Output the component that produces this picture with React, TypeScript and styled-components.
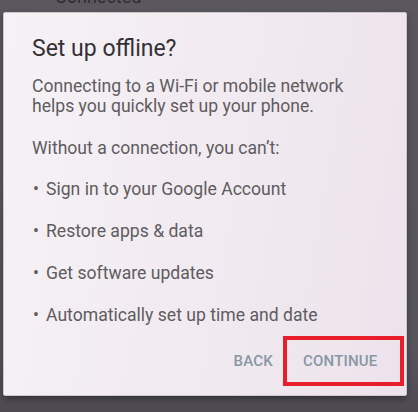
import React from "react";
import styled, { createGlobalStyle } from "styled-components";

const GlobalStyle = createGlobalStyle`
  html, body {
    margin: 0;
    padding: 0;
    background: #58565c;
  }
  body {
    font-family: Roboto, "Noto Sans", "Liberation Sans", sans-serif;
  }
`;

const items = [
  "Sign in to your Google Account",
  "Restore apps & data",
  "Get software updates",
  "Automatically set up time and date",
];

const App = () => (
  <Screen>
    <GlobalStyle />
    <StatusStrip>
      <StatusText>Connected</StatusText>
    </StatusStrip>
    <Dialog>
      <Title>Set up offline?</Title>
      <Paragraph>
        Connecting to a Wi-Fi or mobile network
        <br />
        helps you quickly set up your phone.
      </Paragraph>
      <Lead>Without a connection, you can’t:</Lead>
      <List>
        {items.map((item) => (
          <ListItem key={item}>
            <Bullet>•</Bullet>
            <span>{item}</span>
          </ListItem>
        ))}
      </List>
      <Footer>
        <TextButton>BACK</TextButton>
        <Highlight>
          <TextButton>CONTINUE</TextButton>
        </Highlight>
      </Footer>
    </Dialog>
  </Screen>
);

const Screen = styled.div`
  width: 418px;
  height: 412px;
  overflow: hidden;
  background: linear-gradient(180deg, #5a585e 0%, #57555b 85%, #4d4b51 100%);
`;

const StatusStrip = styled.div`
  height: 12px;
  overflow: hidden;
  display: flex;
  align-items: flex-end;
  padding-left: 55px;
`;

const StatusText = styled.span`
  font-size: 18px;
  line-height: 18px;
  margin-bottom: 6px;
  color: #2e2c32;
`;

const Dialog = styled.div`
  width: 404px;
  height: 384px;
  margin-left: 3px;
  box-sizing: border-box;
  padding: 22px 0 9px 28px;
  display: flex;
  flex-direction: column;
  background: linear-gradient(100deg, #f5f2f5 0%, #f1eaf0 55%, #ece2eb 100%);
  border: 1px solid #cfc7ce;
  border-radius: 2px;
  box-shadow: 0 3px 6px rgba(0, 0, 0, 0.35);
`;

const Title = styled.div`
  font-size: 23px;
  line-height: 28px;
  color: #333135;
`;

const Paragraph = styled.div`
  margin-top: 13px;
  font-size: 17.6px;
  line-height: 20px;
  color: #5e5c60;
`;

const Lead = styled(Paragraph)`
  margin-top: 22px;
`;

const List = styled.div`
  margin-top: 21px;
  display: flex;
  flex-direction: column;
  gap: 22px;
`;

const ListItem = styled.div`
  display: flex;
  font-size: 17.6px;
  line-height: 20px;
  color: #5e5c60;
`;

const Bullet = styled.span`
  width: 14px;
  padding-left: 1px;
  box-sizing: border-box;
`;

const Footer = styled.div`
  margin-top: auto;
  display: flex;
  justify-content: flex-end;
  align-items: center;
  gap: 10px;
  padding-right: 2px;
`;

const TextButton = styled.span`
  font-size: 15px;
  font-weight: 500;
  letter-spacing: 0.2px;
  color: #8797a3;
`;

const Highlight = styled.div`
  width: 121px;
  height: 50px;
  box-sizing: border-box;
  border: 4px solid #e81f2b;
  display: flex;
  align-items: center;
  padding-left: 16px;
`;

export default App;
